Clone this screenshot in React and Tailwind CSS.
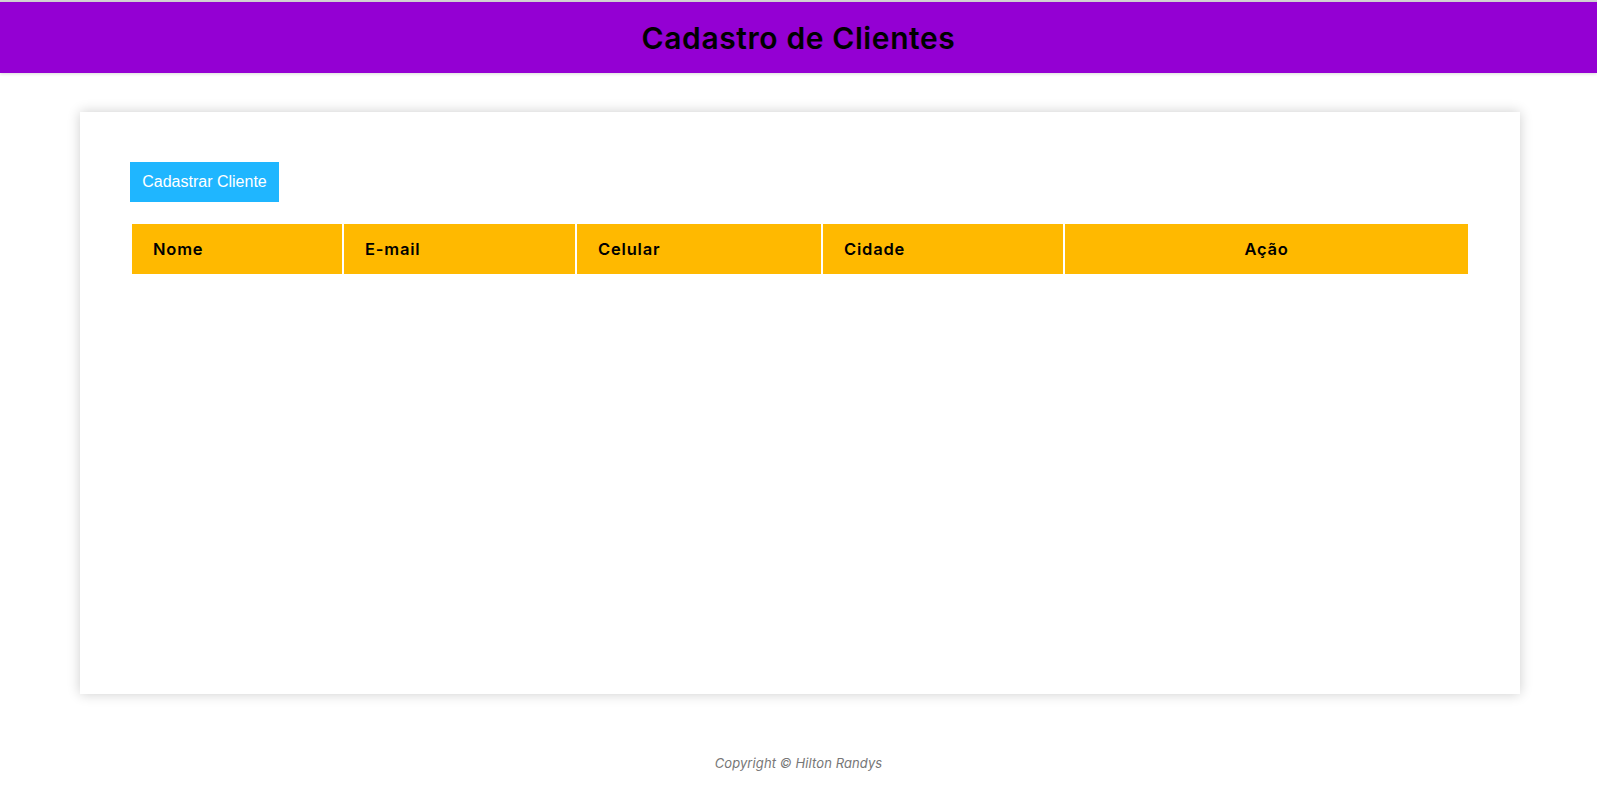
export default function App() {
  const cols = [
    { label: "Nome", w: "w-[210px]", align: "text-left" },
    { label: "E-mail", w: "w-[231px]", align: "text-left" },
    { label: "Celular", w: "w-[244px]", align: "text-left" },
    { label: "Cidade", w: "w-[240px]", align: "text-left" },
    { label: "Ação", w: "w-[403px]", align: "text-center" },
  ];
  return (
    <div className="min-h-[787px] bg-white flex flex-col" style={{ fontFamily: "Inter, 'Noto Sans', sans-serif" }}>
      <div className="h-[2px] bg-[#d4d4d4]" />
      <header className="h-[71px] bg-[#9400d3] flex items-center justify-center shadow-[0_1px_3px_rgba(0,0,0,0.15)]">
        <h1 className="text-[30px] font-semibold tracking-[0.6px] text-black leading-none">Cadastro de Clientes</h1>
      </header>
      <main className="mt-[39px] ml-[80px] w-[1440px] h-[582px] bg-white shadow-[0_0_12px_rgba(0,0,0,0.2)] px-[50px] pt-[50px]">
        <button
          className="h-[40px] w-[149px] bg-[#1fb6ff] text-white text-[16px] leading-none flex items-center justify-center"
          style={{ fontFamily: "'Liberation Sans', Arial, sans-serif" }}
        >
          Cadastrar Cliente
        </button>
        <table className="mt-[20px] w-[1340px] table-fixed border-separate border-spacing-[2px]">
          <thead>
            <tr>
              {cols.map((c) => (
                <th
                  key={c.label}
                  className={`${c.w} ${c.align} h-[50px] bg-[#ffb900] px-[21px] text-[16.5px] font-semibold tracking-[0.8px] text-black`}
                >
                  {c.label}
                </th>
              ))}
            </tr>
          </thead>
        </table>
      </main>
      <footer className="mt-[60px] text-center text-[13px] italic text-[#777] tracking-[0.1px]">
        Copyright © Hilton Randys
      </footer>
    </div>
  );
}
